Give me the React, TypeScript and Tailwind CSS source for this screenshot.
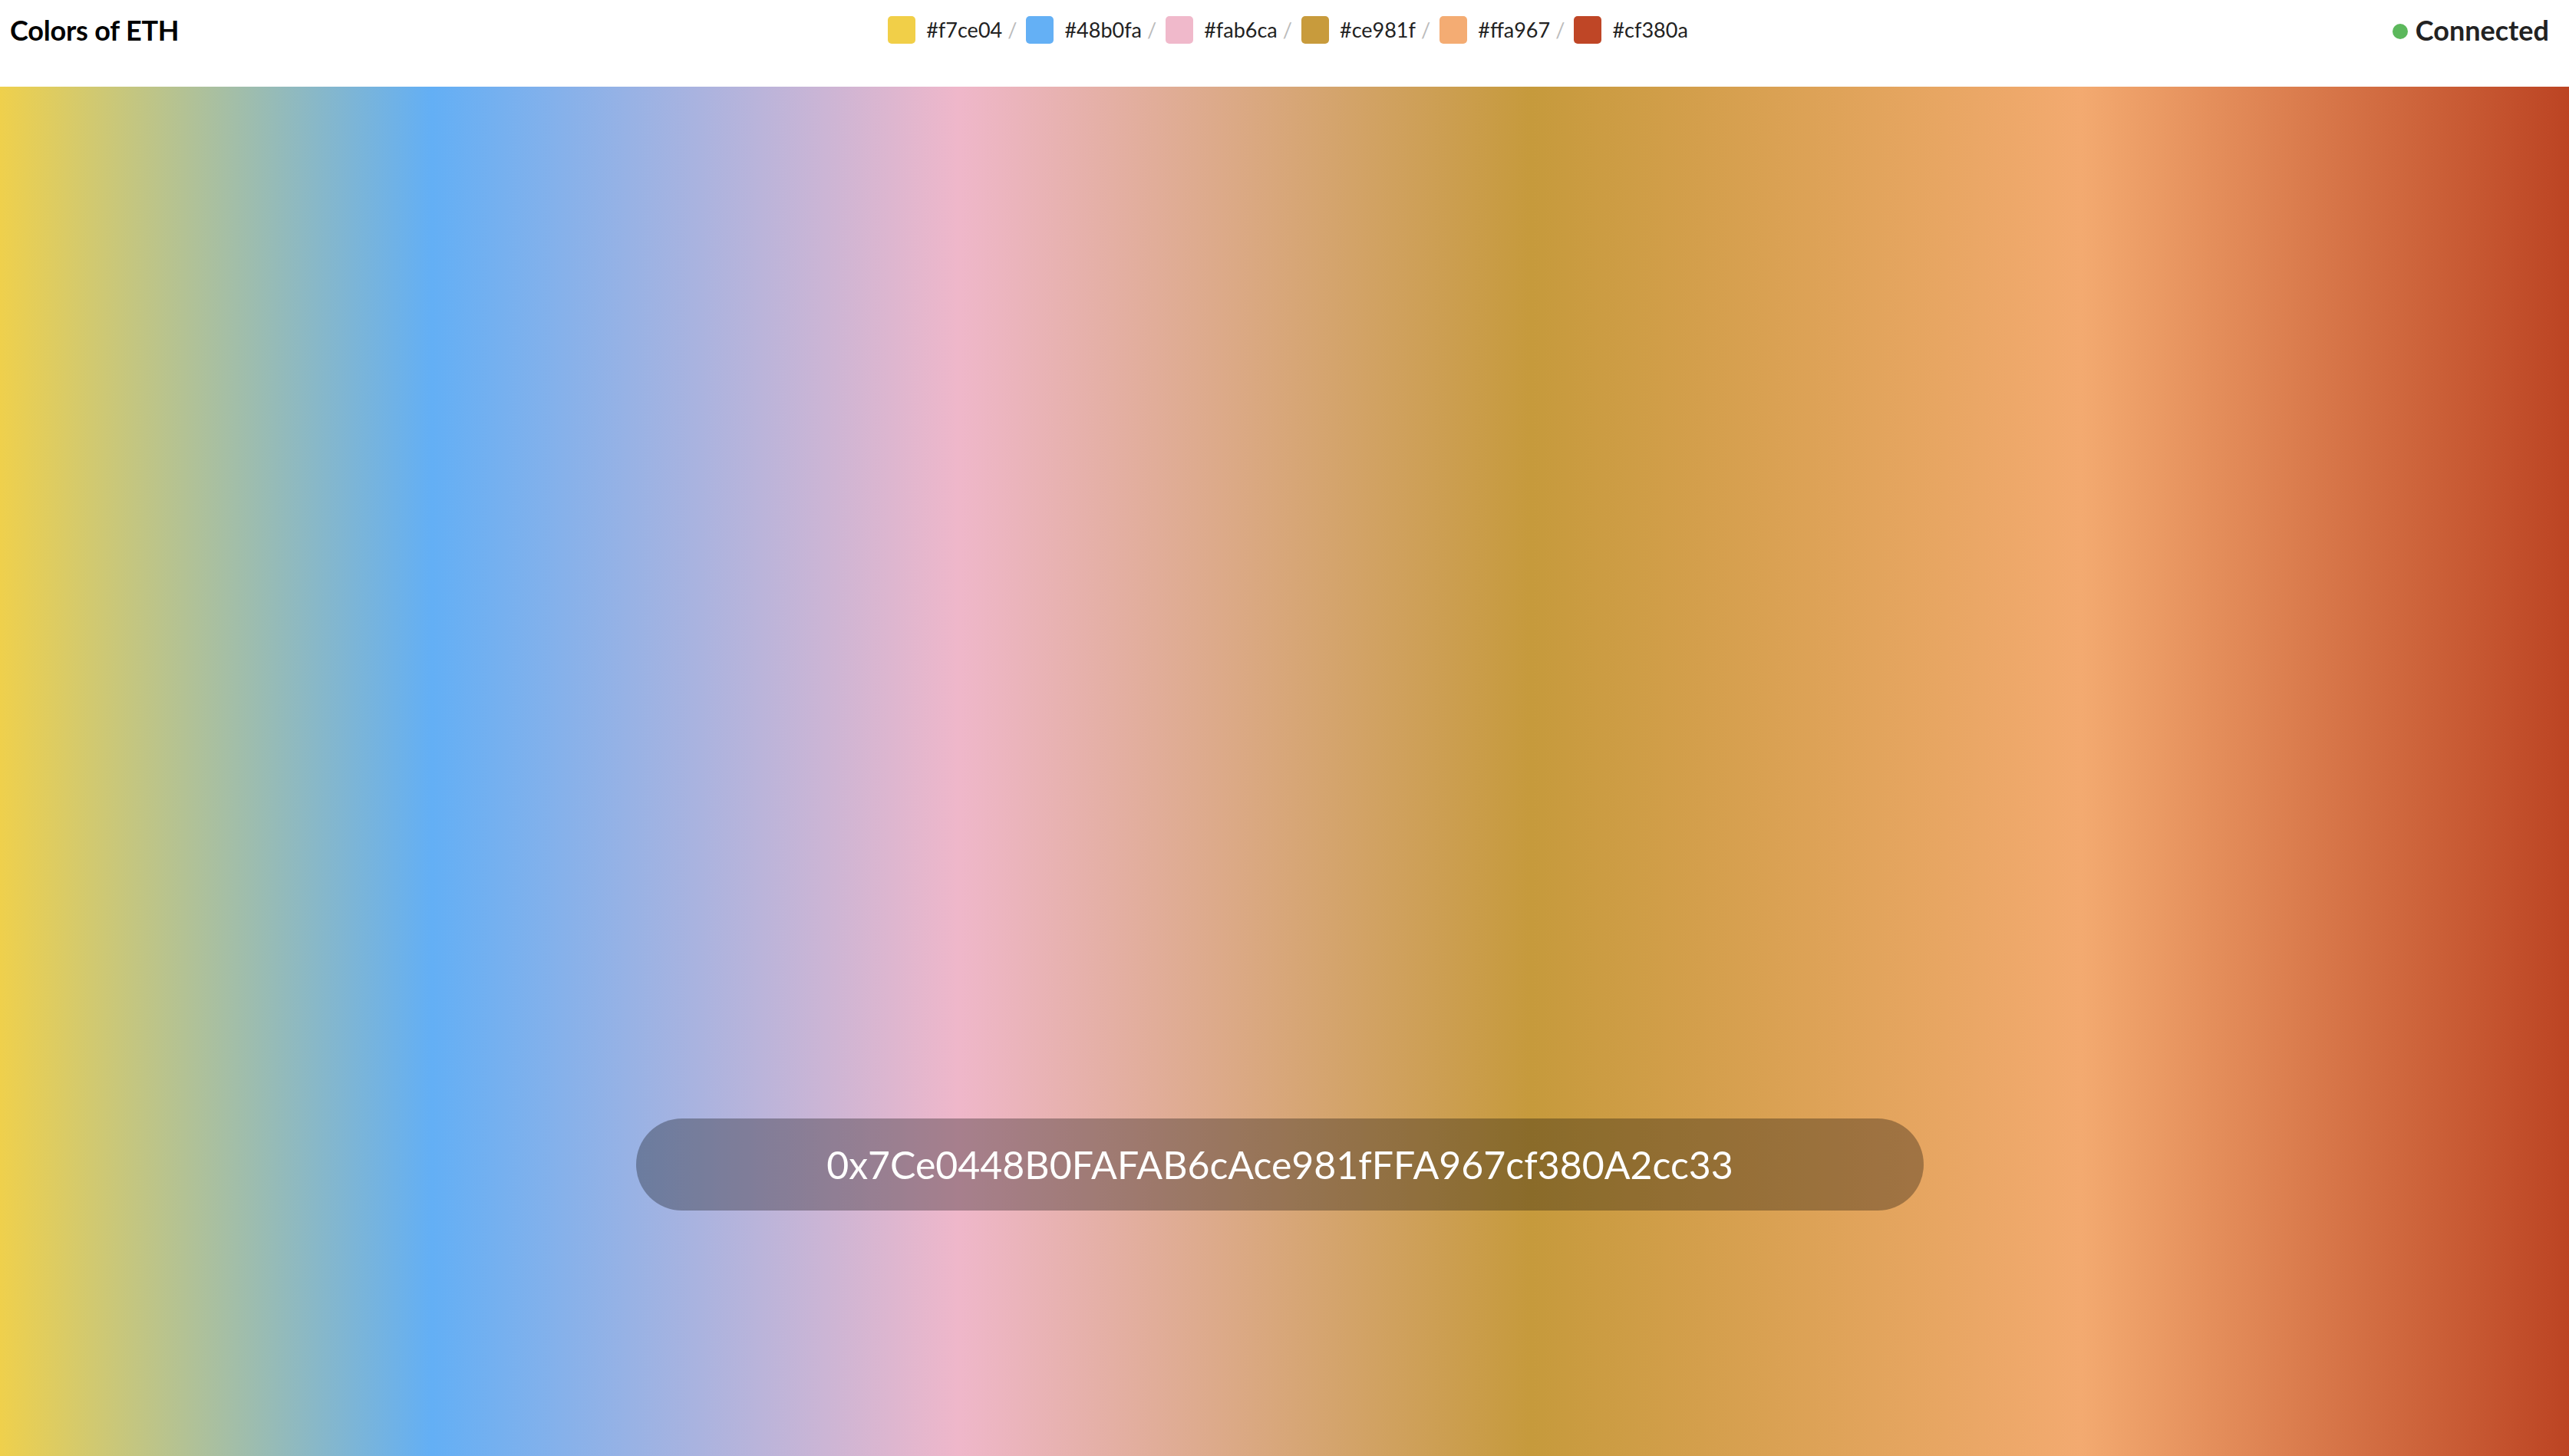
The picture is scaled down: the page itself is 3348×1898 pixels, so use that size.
const swatches = [
  { hex: '#f7ce04', bg: 'bg-[#f1cf48]' },
  { hex: '#48b0fa', bg: 'bg-[#64b0f5]' },
  { hex: '#fab6ca', bg: 'bg-[#f0b9cb]' },
  { hex: '#ce981f', bg: 'bg-[#c89b3c]' },
  { hex: '#ffa967', bg: 'bg-[#f4ac73]' },
  { hex: '#cf380a', bg: 'bg-[#bf4626]' },
]

export default function App() {
  return (
    <div className="w-full h-[1898px] flex flex-col bg-white font-['Lato','Noto_Sans',sans-serif]">
      <header className="h-[113px] shrink-0 bg-white">
        <div className="h-[78px] flex items-center justify-between pl-[13px] pr-[26px]">
          <h1 className="w-[500px] text-[36px] font-bold text-black tracking-[-0.2px]">Colors of ETH</h1>

          <div className="ml-[22px] flex items-center gap-[12px]">
            {swatches.map((s, i) => (
              <div key={s.hex} className="flex items-center">
                <span className={`w-[36px] h-[36px] rounded-[5px] ${s.bg}`} />
                <span className="ml-[14px] text-[27px] text-[#222]">{s.hex}</span>
                {i < swatches.length - 1 && (
                  <span className="ml-[7px] text-[27px] text-[#bbb]">/</span>
                )}
              </div>
            ))}
          </div>

          <div className="w-[500px] flex items-center justify-end gap-[10px]">
            <span className="w-[20px] h-[20px] rounded-full bg-[#5cb85c] mt-[3px]" />
            <span className="text-[36px] font-bold text-[#222]">Connected</span>
          </div>
        </div>
      </header>

      {/* gradient canvas */}
      <main className="relative flex-1 bg-[linear-gradient(to_right,#efd04c_0%,#63aff5_16.8%,#efb7ca_37.3%,#c69a3c_59.6%,#f3aa70_81%,#bc4423_100%)]">
        <div className="absolute left-[calc(50%-845px)] bottom-[320px] w-[1678px] h-[120px] rounded-full bg-black/30 flex items-center justify-center">
          <span className="text-[50px] text-white">0x7Ce0448B0FAFAB6cAce981fFFA967cf380A2cc33</span>
        </div>
      </main>
    </div>
  )
}
